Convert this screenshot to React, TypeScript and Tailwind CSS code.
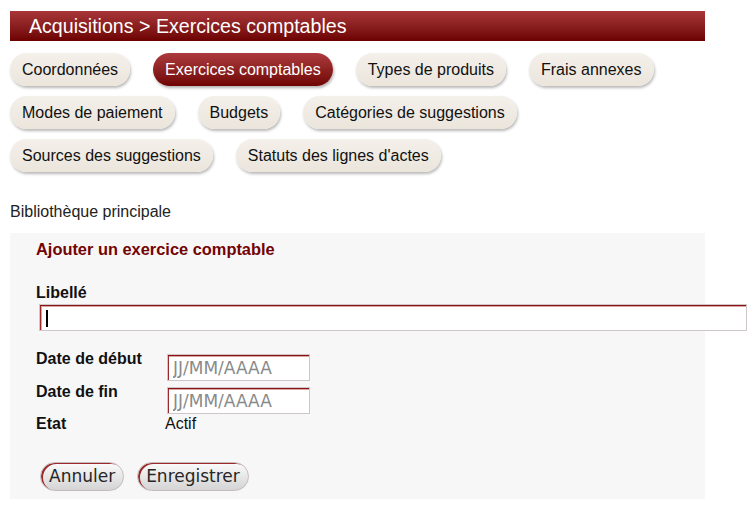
import React from "react";

const tabs = [
  ["Coordonnées", "Exercices comptables", "Types de produits", "Frais annexes"],
  ["Modes de paiement", "Budgets", "Catégories de suggestions"],
  ["Sources des suggestions", "Statuts des lignes d'actes"],
];

const active = "Exercices comptables";

const Tab = ({ label }: { label: string }) => {
  const on = label === active;
  return (
    <button
      className={
        on
          ? "h-[33px] px-[12px] rounded-full text-[16px] text-white bg-gradient-to-b from-[#ad3a3e] to-[#6f0303] shadow-[1px_2px_3px_rgba(0,0,0,0.3)]"
          : "h-[33px] px-[12px] rounded-full text-[16px] text-[#111] bg-gradient-to-b from-[#f4f0ea] to-[#ebe5dc] shadow-[1px_2px_3px_rgba(0,0,0,0.28)]"
      }
    >
      {label}
    </button>
  );
};

const DateInput = () => (
  <input
    readOnly
    placeholder="JJ/MM/AAAA"
    className="w-[143px] h-[27px] bg-white border border-[#cdc7c7] pl-[5px] text-[17px] placeholder:text-[#8a8a8a] shadow-[inset_0_1px_0_#8c1414,inset_1px_0_0_#9c2a2a,inset_0_2px_0_#d6a4a4] outline-none"
    style={{ fontFamily: '"DejaVu Sans", sans-serif' }}
  />
);

const FormButton = ({ label }: { label: string }) => (
  <button
    className="h-[29px] px-[8px] rounded-full text-[17px] text-[#262626] bg-gradient-to-b from-[#fbfbfb] to-[#d4d4d4] border border-[#c4bcbc] shadow-[inset_2px_1px_0_#9c2a2a]"
    style={{ fontFamily: '"DejaVu Sans", sans-serif' }}
  >
    {label}
  </button>
);

export default function App() {
  return (
    <div
      className="w-[754px] h-[518px] bg-white px-[10px] pt-[11px] text-[#111] overflow-hidden"
      style={{ fontFamily: '"Liberation Sans", Arial, sans-serif' }}
    >
      {/* header */}
      <div className="w-[695px] h-[30px] pl-[19px] bg-gradient-to-b from-[#a93639] to-[#6c0101] text-white text-[19.6px] leading-[30px]">
        Acquisitions &gt; Exercices comptables
      </div>

      {/* tabs */}
      <div className="mt-[12px] flex flex-col gap-[10px]">
        {tabs.map((row, i) => (
          <div key={i} className="flex gap-[23px]">
            {row.map((t) => (
              <Tab key={t} label={t} />
            ))}
          </div>
        ))}
      </div>

      <div className="mt-[31px] text-[16px] leading-[18px] text-[#222]">
        Bibliothèque principale
      </div>

      {/* form panel */}
      <div className="mt-[12px] w-[695px] bg-[#f7f7f7] pl-[26px] pt-[6px] pb-[8px]">
        <div className="text-[16.4px] leading-[21px] font-bold text-[#730404]">
          Ajouter un exercice comptable
        </div>

        <div className="mt-[24px] text-[16px] leading-[18px] font-bold">Libellé</div>
        <div className="relative mt-[2px] ml-[3px] w-[708px] h-[27px]">
          <input
            readOnly
            className="w-full h-full bg-white border border-[#cdc7c7] shadow-[inset_0_1px_0_#8c1414,inset_1px_0_0_#9c2a2a,inset_0_2px_0_#d6a4a4,inset_2px_0_0_#d6a4a4] outline-none"
          />
          <span className="absolute left-[7px] top-[6px] w-[2px] h-[17px] bg-black" />
        </div>

        <div className="mt-[19px] flex items-start">
          <div className="w-[131px] text-[16px] leading-[18px] font-bold">Date de début</div>
          <div className="mt-[4px]">
            <DateInput />
          </div>
        </div>
        <div className="mt-[2px] flex items-start">
          <div className="w-[131px] text-[16px] leading-[18px] font-bold">Date de fin</div>
          <div className="mt-[4px]">
            <DateInput />
          </div>
        </div>
        <div className="mt-[1px] flex items-start text-[16px] leading-[18px]">
          <div className="w-[129px] font-bold">Etat</div>
          <div>Actif</div>
        </div>

        <div className="mt-[29px] ml-[4px] flex gap-[13px]">
          <FormButton label="Annuler" />
          <FormButton label="Enregistrer" />
        </div>
      </div>
    </div>
  );
}
